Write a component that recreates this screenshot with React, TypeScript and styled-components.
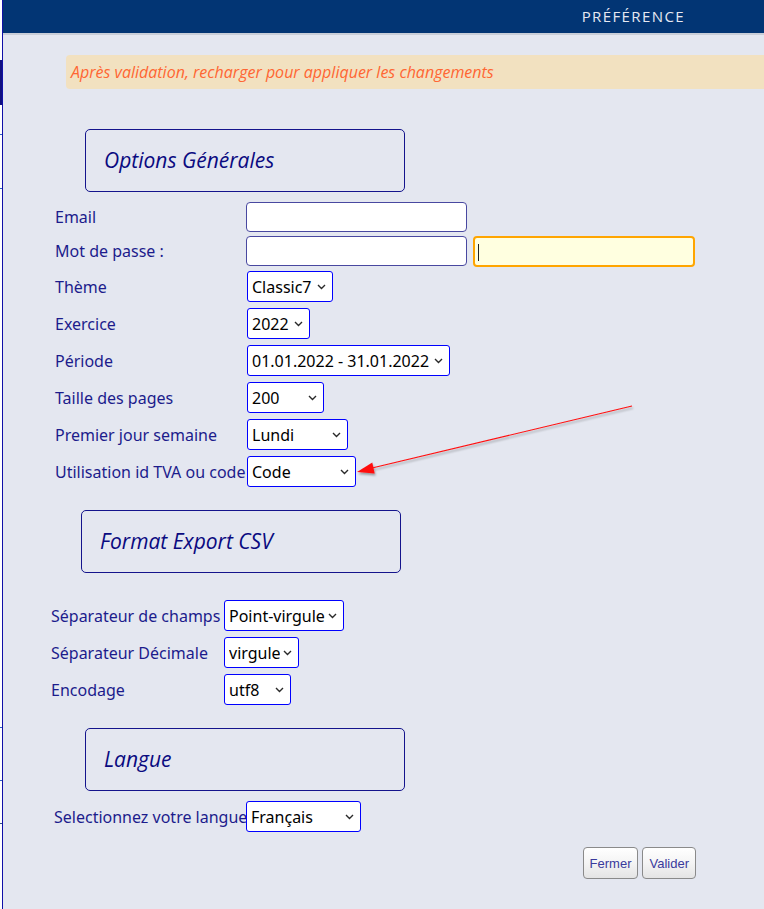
import styled, { createGlobalStyle } from 'styled-components';

const GlobalStyle = createGlobalStyle`
  html, body {
    margin: 0;
    padding: 0;
    background: #f4f5f8;
  }
  * {
    box-sizing: border-box;
  }
`;

const generalRows = [
  { label: 'Thème', value: 'Classic7', width: 86 },
  { label: 'Exercice', value: '2022', width: 63 },
  { label: 'Période', value: '01.01.2022 - 31.01.2022', width: 203 },
  { label: 'Taille des pages', value: '200', width: 77 },
  { label: 'Premier jour semaine', value: 'Lundi', width: 101 },
  { label: 'Utilisation id TVA ou code', value: 'Code', width: 109 },
];

const csvRows = [
  { label: 'Séparateur de champs', value: 'Point-virgule', width: 120 },
  { label: 'Séparateur Décimale', value: 'virgule', width: 75 },
  { label: 'Encodage', value: 'utf8', width: 67 },
];

function Dropdown({ value, width }: { value: string; width: number }) {
  return (
    <SelectWrap>
      <Select defaultValue={value} style={{ width }}>
        <option>{value}</option>
      </Select>
      <Chevron width="9" height="6" viewBox="0 0 9 6">
        <path d="M1 1 L4.5 4.5 L8 1" fill="none" stroke="#2a2a2a" strokeWidth="1.4" />
      </Chevron>
    </SelectWrap>
  );
}

function Preference() {
  return (
    <Page>
      <GlobalStyle />
      <Backdrop />
      <Dialog>
        <TitleBar>
          <Title>Préférence</Title>
        </TitleBar>
        <Content>
          <Warning>Après validation, recharger pour appliquer les changements</Warning>

          <SectionBox ml={82}>
            <SectionTitle>Options Générales</SectionTitle>
          </SectionBox>
          <FormGrid ml={52} labelWidth={190}>
            <Label>Email</Label>
            <TextInput type="text" />
            <span />
            <Label>Mot de passe :</Label>
            <TextInput type="password" />
            <CaretWrap>
              <ConfirmInput type="password" />
            </CaretWrap>
            {generalRows.map((row) => (
              <Row key={row.label}>
                <Label>{row.label}</Label>
                <Dropdown value={row.value} width={row.width} />
              </Row>
            ))}
          </FormGrid>

          <SectionBox ml={78} mt={20}>
            <SectionTitle>Format Export CSV</SectionTitle>
          </SectionBox>
          <FormGrid ml={48} mt={24} labelWidth={171}>
            {csvRows.map((row) => (
              <Row key={row.label}>
                <Label>{row.label}</Label>
                <Dropdown value={row.value} width={row.width} />
              </Row>
            ))}
          </FormGrid>

          <SectionBox ml={82} mt={20}>
            <SectionTitle>Langue</SectionTitle>
          </SectionBox>
          <FormGrid ml={51} mt={7} labelWidth={190}>
            <Label>Selectionnez votre langue</Label>
            <Dropdown value="Français" width={115} />
          </FormGrid>

          <ButtonBar>
            <Button>Fermer</Button>
            <Button>Valider</Button>
          </ButtonBar>
        </Content>

        <Arrow width="764" height="909" viewBox="0 0 764 909">
          <defs>
            <filter id="shadow" x="-10%" y="-50%" width="120%" height="200%">
              <feDropShadow dx="1" dy="2" stdDeviation="1.2" floodColor="#000" floodOpacity="0.35" />
            </filter>
          </defs>
          <g filter="url(#shadow)" transform="translate(-3 0)">
            <line x1="632" y1="406" x2="372" y2="468" stroke="#ff1010" strokeWidth="1.2" />
            <polygon points="357,472 374.7,473.5 372.3,462.5" fill="#ff1010" />
          </g>
        </Arrow>
      </Dialog>
    </Page>
  );
}

export default Preference;

const Page = styled.div`
  display: flex;
  min-height: 909px;
  overflow: hidden;
`;
const Backdrop = styled.div`
  width: 2px;
  flex-shrink: 0;
  background: linear-gradient(
    to bottom,
    #ffffff 0px, #ffffff 60px,
    #101080 60px, #101080 105px,
    #ffffff 105px, #ffffff 134px,
    #3060c0 134px, #3060c0 135px,
    #ffffff 135px, #ffffff 188px,
    #3060c0 188px, #3060c0 189px,
    #ffffff 189px, #ffffff 727px,
    #3060c0 727px, #3060c0 728px,
    #ffffff 728px, #ffffff 780px,
    #3060c0 780px, #3060c0 781px,
    #ffffff 781px, #ffffff 823px,
    #305080 823px, #305080 824px,
    #ffffff 824px
  );
`;
const Dialog = styled.div`
  position: relative;
  flex: 1;
  border-left: 1px solid #1010a8;
  background: #e4e7f0;
  min-height: 909px;
`;
const TitleBar = styled.div`
  height: 35px;
  background: #023574;
  border-bottom: 2px solid #c9ced8;
  display: flex;
  align-items: center;
  justify-content: flex-end;
  padding-right: 79px;
`;
const Title = styled.div`
  font-family: 'Open Sans', sans-serif;
  font-size: 15px;
  letter-spacing: 1.4px;
  text-transform: uppercase;
  color: #e6e9f2;
  margin-top: -2px;
`;
const Content = styled.div`
  display: flex;
  flex-direction: column;
  align-items: flex-start;
`;
const Warning = styled.div`
  align-self: stretch;
  margin: 20px -20px 0 63px;
  height: 34px;
  padding: 0 5px;
  display: flex;
  align-items: center;
  background: #f2e1c0;
  border-radius: 4px;
  font-family: 'Open Sans', sans-serif;
  font-style: italic;
  font-size: 16px;
  color: #ff6633;
`;
const SectionBox = styled.div<{ ml: number; mt?: number }>`
  margin-left: ${(p) => p.ml}px;
  margin-top: ${(p) => p.mt ?? 40}px;
  width: 320px;
  height: 63px;
  border: 1px solid #14148c;
  border-radius: 5px;
  padding: 0 0 1px 18px;
  display: flex;
  align-items: center;
`;
const SectionTitle = styled.div`
  font-family: 'Open Sans', sans-serif;
  font-style: italic;
  font-size: 21px;
  color: #0a0a80;
`;
const FormGrid = styled.div<{ ml: number; mt?: number; labelWidth: number }>`
  margin-left: ${(p) => p.ml}px;
  margin-top: ${(p) => p.mt ?? 8}px;
  display: grid;
  grid-template-columns: ${(p) => p.labelWidth}px auto auto;
  align-items: center;
  justify-items: start;
`;
const Row = styled.div`
  display: contents;
`;
const Label = styled.label`
  grid-column: 1;
  font-family: 'Noto Sans', sans-serif;
  font-size: 16px;
  color: #1c1c8c;
  white-space: nowrap;
`;
const TextInput = styled.input`
  width: 221px;
  height: 30px;
  margin: 2px 0 2px 1px;
  border: 1px solid #4848a0;
  border-radius: 4px;
  background: #ffffff;
  outline: none;
`;
const CaretWrap = styled.div`
  position: relative;
  margin-left: 6px;
  &::after {
    content: '';
    position: absolute;
    left: 5px;
    top: 8px;
    width: 1px;
    height: 17px;
    background: #222;
  }
`;
const ConfirmInput = styled.input`
  display: block;
  width: 222px;
  height: 31px;
  border: 2px solid #ffa500;
  border-radius: 4px;
  background: #ffffe0;
  outline: none;
`;
const SelectWrap = styled.div`
  grid-column: 2 / -1;
  position: relative;
  margin: 3px 0 3px 2px;
`;
const Select = styled.select`
  display: block;
  appearance: none;
  height: 31px;
  margin: 0;
  padding: 0 18px 0 4px;
  border: 1px solid #0000ff;
  border-radius: 3px;
  background: #ffffff;
  color: #000000;
  font-family: 'Noto Sans', sans-serif;
  font-size: 16px;
`;
const Chevron = styled.svg`
  position: absolute;
  right: 7px;
  top: 13px;
  pointer-events: none;
`;
const ButtonBar = styled.div`
  align-self: stretch;
  display: flex;
  justify-content: flex-end;
  gap: 4px;
  margin-top: 12px;
  padding-right: 68px;
`;
const Button = styled.button`
  height: 32px;
  padding: 0 6px;
  border: 1px solid #8a8a8a;
  border-radius: 4px;
  background: linear-gradient(to bottom, #ffffff 0%, #f4f4f4 50%, #e4e4e4 100%);
  font-family: 'Liberation Sans', Arial, sans-serif;
  font-size: 13px;
  color: #3a3a9c;
`;
const Arrow = styled.svg`
  position: absolute;
  left: 0;
  top: 0;
  pointer-events: none;
`;
